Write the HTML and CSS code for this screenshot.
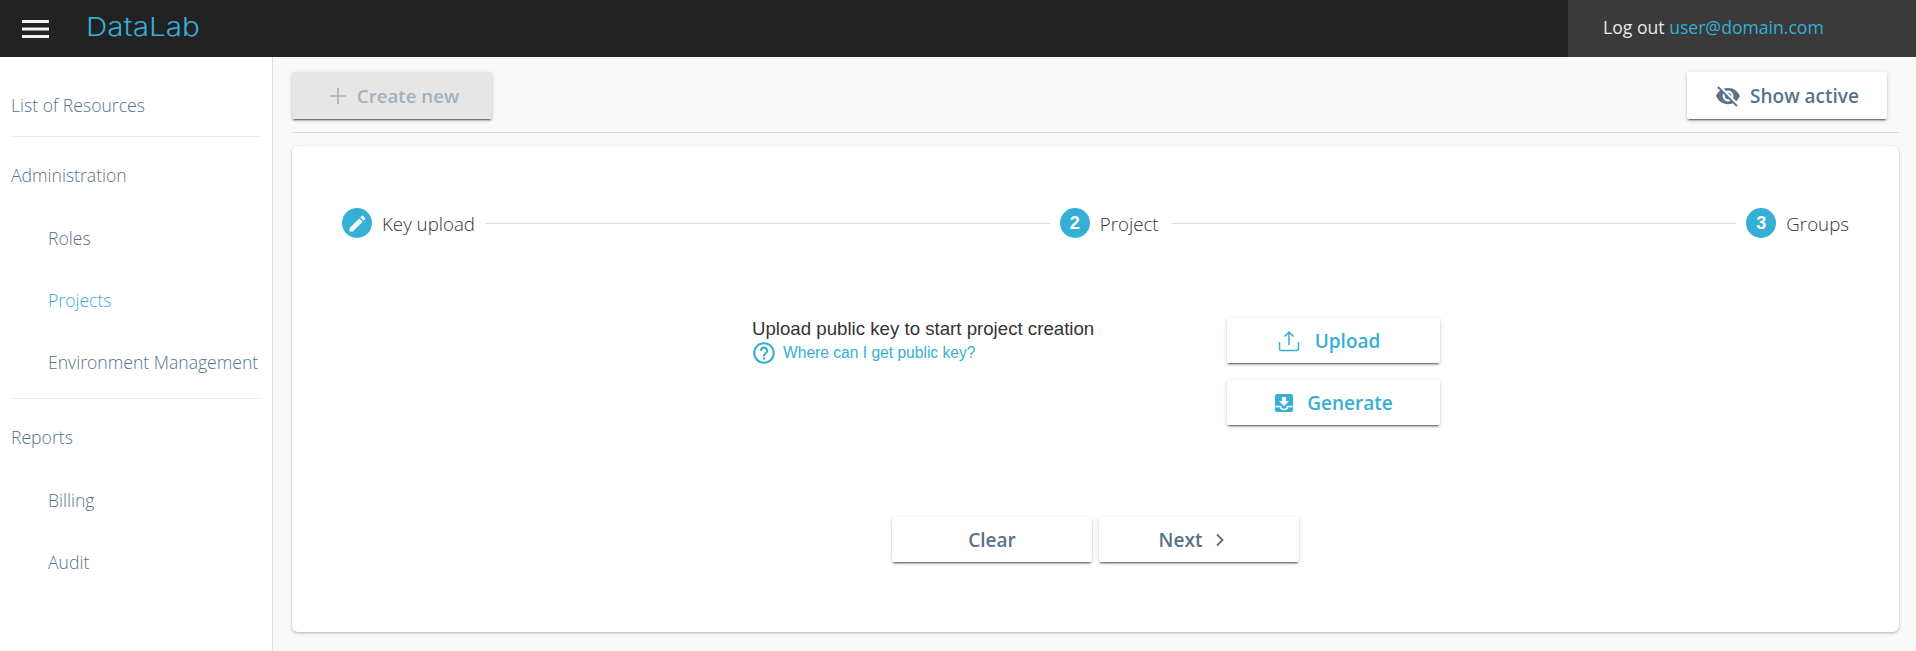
FILE: index.html
```html
<!DOCTYPE html>
<html lang="en">
<head>
<meta charset="utf-8">
<title>DataLab</title>
<link rel="stylesheet" href="styles.css">
</head>
<body>
<div class="app">
  <header class="topbar">
    <div class="brand">
      <svg class="burger" width="27" height="18" viewBox="0 0 27 18"><rect y="0" width="27" height="3" fill="#f2f2f2"/><rect y="7.5" width="27" height="3" fill="#f2f2f2"/><rect y="15" width="27" height="3" fill="#f2f2f2"/></svg>
      <span class="logo">DataLab</span>
    </div>
    <div class="user"><span>Log out</span> <a class="user-mail">user@domain.com</a></div>
  </header>
  <div class="body">
    <nav class="side">
      <div class="side-group">
        <div class="side-item">List of Resources</div>
      </div>
      <div class="side-group">
        <div class="side-item">Administration</div>
        <div class="side-item sub">Roles</div>
        <div class="side-item sub active">Projects</div>
        <div class="side-item sub">Environment Management</div>
      </div>
      <div class="side-group last">
        <div class="side-item">Reports</div>
        <div class="side-item sub">Billing</div>
        <div class="side-item sub">Audit</div>
      </div>
    </nav>
    <main class="main">
      <div class="toolbar">
        <button class="btn disabled"><svg class="ic-plus" width="16" height="16" viewBox="0 0 16 16"><path d="M8 0v16M0 8h16" stroke="#a3b1be" stroke-width="1.6" fill="none"/></svg>Create new</button>
        <button class="btn"><svg class="ic" width="26" height="26" viewBox="0 0 24 24"><path fill="#577289" d="M12 7c2.76 0 5 2.24 5 5 0 .65-.13 1.26-.36 1.83l2.92 2.92c1.51-1.26 2.7-2.89 3.43-4.75-1.73-4.39-6-7.5-11-7.5-1.4 0-2.74.25-3.98.7l2.16 2.16C10.74 7.13 11.35 7 12 7zM2 4.27l2.28 2.28.46.46C3.08 8.3 1.78 10.02 1 12c1.73 4.39 6 7.5 11 7.5 1.55 0 3.03-.3 4.38-.84l.42.42L19.73 22 21 20.73 3.27 3 2 4.27zM7.53 9.8l1.55 1.55c-.05.21-.08.43-.08.65 0 1.66 1.34 3 3 3 .22 0 .44-.03.65-.08l1.55 1.55c-.67.33-1.41.53-2.2.53-2.76 0-5-2.24-5-5 0-.79.2-1.53.53-2.2zm4.31-.78l3.15 3.15.02-.16c0-1.66-1.34-3-3-3l-.17.01z"/></svg>Show active</button>
      </div>
      <section class="card">
        <div class="stepper">
          <div class="step"><span class="dot"><svg width="21" height="21" viewBox="0 0 24 24"><path fill="#fff" d="M3 17.25V21h3.75L17.81 9.94l-3.75-3.75L3 17.25zM20.71 7.04c.39-.39.39-1.02 0-1.41l-2.34-2.34c-.39-.39-1.02-.39-1.41 0l-1.83 1.83 3.75 3.75 1.83-1.83z"/></svg></span><span class="step-label">Key upload</span></div>
          <div class="step-line"></div>
          <div class="step"><span class="dot">2</span><span class="step-label">Project</span></div>
          <div class="step-line wide"></div>
          <div class="step"><span class="dot">3</span><span class="step-label">Groups</span></div>
        </div>
        <div class="upload">
          <div class="upload-text">
            <div class="upload-title">Upload public key to start project creation</div>
            <a class="upload-link"><svg width="26" height="26" viewBox="0 0 24 24"><path fill="#35afd5" d="M11 18h2v-2h-2v2zm1-16C6.48 2 2 6.48 2 12s4.48 10 10 10 10-4.48 10-10S17.52 2 12 2zm0 18c-4.41 0-8-3.59-8-8s3.59-8 8-8 8 3.59 8 8-3.59 8-8 8zm0-14c-2.21 0-4 1.79-4 4h2c0-1.1.9-2 2-2s2 .9 2 2c0 2-3 1.75-3 5h2c0-2.25 3-2.5 3-5 0-2.21-1.79-4-4-4z"/></svg>Where can I get public key?</a>
          </div>
          <div class="upload-actions">
            <button class="btn accent btn-upload"><svg class="ic-up" width="22" height="22" viewBox="0 0 22 22"><path d="M11 15V2M6.500 6.500 11 2l4.500 4.500M1.500 12v7a1.500 1.500 0 0 0 1.500 1.500h16a1.500 1.500 0 0 0 1.500-1.500v-7" stroke="#35afd5" stroke-width="1.500" fill="none"/></svg>Upload</button>
            <button class="btn accent"><svg class="ic-gen" width="20" height="20" viewBox="0 0 20 20"><rect x="1" y="1" width="18" height="18" rx="2" fill="#35afd5"/><path d="M8 4h4v4h3l-5 5-5-5h3z" fill="#fff"/><path d="M1.500 13.500h5c0 1.800 1.500 3 3.500 3s3.500-1.200 3.500-3h5" stroke="#fff" stroke-width="1.600" fill="none"/></svg>Generate</button>
          </div>
        </div>
        <div class="footer-actions">
          <button class="btn">Clear</button>
          <button class="btn btn-next">Next<svg class="ic-next" width="10" height="14" viewBox="0 0 10 14"><path d="M2 1.500 7.500 7 2 12.500" stroke="#577289" stroke-width="1.800" fill="none"/></svg></button>
        </div>
      </section>
    </main>
  </div>
</div>
</body>
</html>
```

FILE: styles.css
```css
* { box-sizing: border-box; }
html, body { margin: 0; height: 100%; overflow: hidden; }
body { font-family: "Open Sans", sans-serif; background: #f9f9f9; }
.app { display: flex; flex-direction: column; height: 651px; }

.topbar { height: 57px; flex: none; display: flex; justify-content: space-between; background: #222; }
.brand { display: flex; align-items: center; padding-left: 22px; }
.burger { display: block; }
.logo { margin: 0 0 4px 37px; font-family: "Inter", sans-serif; font-weight: 300; font-size: 26px; letter-spacing: 0; color: #35afd5; transform: scaleX(1.14); transform-origin: left center; }
.user { width: 348px; background: #3a3a3a; padding-left: 35px; font-size: 17.6px; line-height: 55px; color: #e8e8e8; }
.user-mail { color: #35afd5; }

.body { flex: 1; display: flex; min-height: 0; }
.side { width: 273px; flex: none; background: #fff; border-right: 1px solid #dedede; padding: 17px 12px 0 11px; }
.side-group { border-bottom: 1px solid #eceef2; margin-bottom: 7px; width: 250px; margin-left: -1px; padding-left: 1px; }
.side-group + .side-group { padding-bottom: 5px; }
.side-group.last { border-bottom: 0; }
.side-item { height: 62px; line-height: 62px; font-size: 17.6px; font-weight: 300; color: #577289; white-space: nowrap; }
.side-item.sub { padding-left: 37px; }
.side-item + .side-item.sub:nth-child(2) { margin-top: 1px; }
.side-item.active { color: #35afd5; }

.main { flex: 1; min-width: 0; padding: 15px 17px 0 19px; }
.toolbar { display: flex; justify-content: space-between; height: 61px; border-bottom: 1px solid #dcdcdc; margin-bottom: 13px; }
.btn { width: 200px; height: 45px; border: 0; border-radius: 2px; background: #fff; display: flex; align-items: center; justify-content: center; font-family: "Open Sans", sans-serif; font-size: 19px; font-weight: 600; color: #577289; box-shadow: 0 3px 1px -2px rgba(0,0,0,.35), 0 2px 2px 0 rgba(0,0,0,.2), 0 1px 5px 0 rgba(0,0,0,.12); padding: 0; }
.toolbar .btn { height: 47px; }
.toolbar .btn:last-child { margin-right: 12px; }
.btn.disabled { background: #e6e6e6; color: #a3b1be; padding-left: 5px; font-size: 18.7px; }
.ic-plus { margin-right: 11px; }
.ic { margin-right: 9px; }
.btn.accent { width: 213px; color: #35afd5; }
.btn-upload { padding-right: 9px; }
.ic-up { margin-right: 15px; }
.ic-gen { margin-right: 13px; }
.btn-next { padding-right: 14px; }
.ic-next { margin-left: 13px; }

.card { height: 486px; background: #fff; border-radius: 6px; box-shadow: 0 1px 3px rgba(0,0,0,.3); }
.stepper { display: flex; align-items: center; padding: 62px 50px 0; }
.step { display: flex; align-items: center; flex: none; }
.dot { width: 30px; height: 30px; border-radius: 50%; background: #35afd5; color: #fff; display: flex; align-items: center; justify-content: center; font-family: "Liberation Sans", sans-serif; font-size: 18px; font-weight: 700; }
.step-label { margin-left: 10px; font-size: 18.72px; font-weight: 300; color: #333; }
.step-line { flex: 1; height: 1px; background: #dcdcdc; margin: 0 10px; }
.step-line.wide { margin-left: 13px; }

.upload { display: flex; margin: 80px 0 0 460px; }
.upload-text { width: 475px; font-family: "Liberation Sans", sans-serif; }
.upload-title { font-size: 18.66px; line-height: 22px; color: #333; }
.upload-link { display: flex; align-items: center; font-size: 15.6px; line-height: 24px; color: #35afd5; }
.upload-link svg { margin: 0 6px 0 -1px; }
.upload-actions { display: flex; flex-direction: column; gap: 17px; }

.footer-actions { display: flex; justify-content: center; gap: 7px; margin-top: 92px; }
```
